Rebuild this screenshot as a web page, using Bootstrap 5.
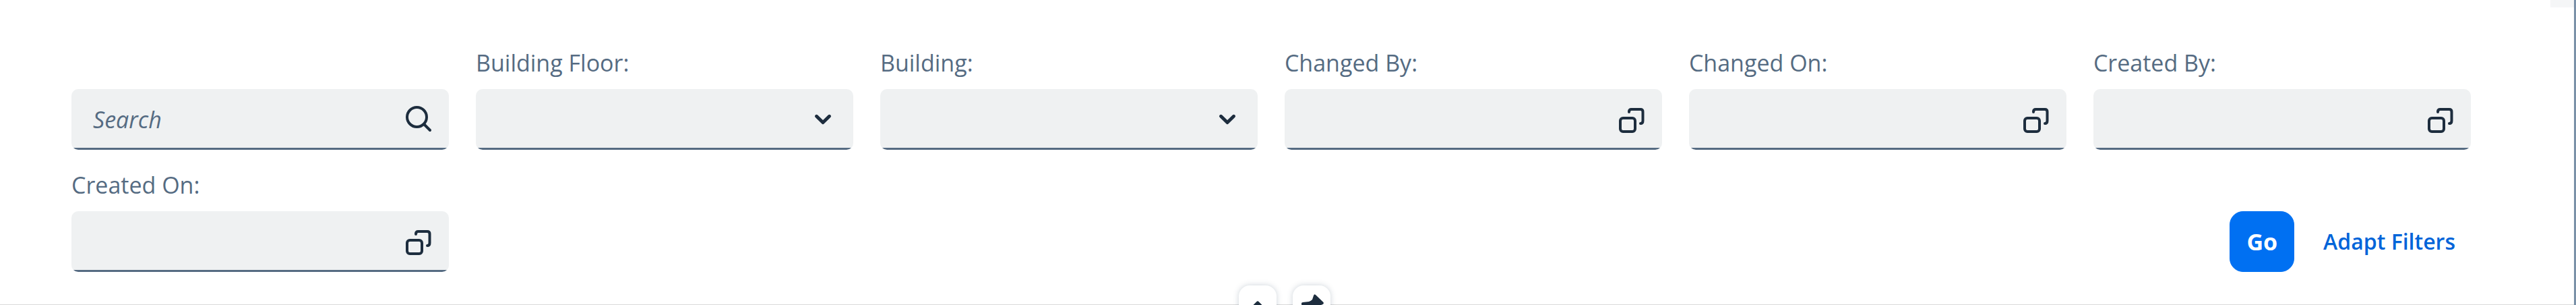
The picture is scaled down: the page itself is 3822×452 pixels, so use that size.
<!DOCTYPE html>
<html lang="en">
<head>
<meta charset="utf-8">
<meta name="viewport" content="width=device-width, initial-scale=1">
<title>Filter Bar</title>
<link href="https://cdn.jsdelivr.net/npm/bootstrap@5.3.0/dist/css/bootstrap.min.css" rel="stylesheet">
<style>
  body { font-family: "Open Sans", "Noto Sans", sans-serif; font-size: 34px; line-height: 40px; color: #556b82; background: #fff; overflow: hidden; }
  .page { border-right: 3px solid #7b91a8; min-height: 100vh; }
  .filter-bar { padding: 73px 153px 48px 106px; border-bottom: 1px solid #d9d9d9; }
  .corner { width: 35px; height: 11px; background: #f5f6f7; }
  .filter-grid { --bs-gutter-x: 40px; row-gap: 32px; }
  .filter-label { margin-bottom: 19px; }
  .field { height: 90px; border-radius: 10px; background: linear-gradient(#556b82, #556b82) bottom / 100% 3px no-repeat #eff1f2; overflow: hidden; }
  .field input, .field select { background: none; border: 0; outline: 0; padding: 0 90px 0 32px; color: #1d2d3e; appearance: none; }
  .field input::placeholder { color: #556b82; font-style: italic; opacity: 1; }
  .field-icon { right: 0; top: 0; padding: 0 23px; border: 0; background: none; pointer-events: none; }
  button.field-icon { pointer-events: auto; }
  .glyph { width: 44px; height: 44px; fill: none; stroke: #1d2d3e; stroke-width: 4; stroke-linecap: round; stroke-linejoin: round; display: block; }
  .actions { gap: 20px; }
  .btn-bar { --bs-btn-font-size: 34px; --bs-btn-line-height: 40px; --bs-btn-border-radius: 20px; --bs-btn-padding-x: 24px; height: 90px; }
  .btn-go { --bs-btn-bg: #0070f2; --bs-btn-border-color: #0070f2; --bs-btn-color: #fff; --bs-btn-hover-bg: #0064d9; --bs-btn-hover-color: #fff; font-weight: 700; }
  .btn-adapt { --bs-btn-font-size: 32px; --bs-btn-padding-x: 22px; --bs-btn-color: #0064d9; --bs-btn-hover-color: #0064d9; font-weight: 600; }
  .toggles { gap: 24px; left: 0; right: 8px; top: calc(100% - 28px); }
  .toggle { width: 56px; height: 56px; border: 0; border-radius: 16px; background: #fff; box-shadow: 0 0 8px rgba(85, 107, 130, .3); padding: 0; }
  .toggle svg { display: block; width: 56px; height: 56px; }
</style>
</head>
<body>
<svg class="d-none" aria-hidden="true">
  <symbol id="search" viewBox="0 0 44 44"><circle cx="19.5" cy="18.5" r="14.5"/><path d="M30 29l9 9"/></symbol>
  <symbol id="down" viewBox="0 0 44 44"><path stroke-width="5" d="M12.5 17.3L22 26.5l9.500-9.200"/></symbol>
  <symbol id="copy" viewBox="0 0 44 44"><rect x="5" y="20" width="22" height="20" rx="4"/><path d="M18 11v-0.500q0-3.500 3.500-3.500H35q3.500 0 3.500 3.500V24q0 4-3.500 4"/></symbol>
</svg>
<main class="page">
  <form class="filter-bar position-relative" onsubmit="return false">
    <div class="corner position-absolute top-0 end-0"></div>
    <div class="row row-cols-6 filter-grid align-items-end">
      <div class="col">
        <div class="field position-relative">
          <input class="w-100 h-100" type="search" placeholder="Search" aria-label="Search">
          <button class="field-icon position-absolute h-100" type="button" aria-label="Search"><svg class="glyph"><use href="#search"/></svg></button>
        </div>
      </div>
      <div class="col">
        <label class="filter-label d-block" for="floor">Building Floor:</label>
        <div class="field position-relative">
          <select class="w-100 h-100" id="floor"><option></option></select>
          <span class="field-icon position-absolute h-100 d-flex align-items-center"><svg class="glyph"><use href="#down"/></svg></span>
        </div>
      </div>
      <div class="col">
        <label class="filter-label d-block" for="building">Building:</label>
        <div class="field position-relative">
          <select class="w-100 h-100" id="building"><option></option></select>
          <span class="field-icon position-absolute h-100 d-flex align-items-center"><svg class="glyph"><use href="#down"/></svg></span>
        </div>
      </div>
      <div class="col">
        <label class="filter-label d-block" for="changedBy">Changed By:</label>
        <div class="field position-relative">
          <input class="w-100 h-100" type="text" id="changedBy">
          <button class="field-icon position-absolute h-100" type="button" aria-label="Choose Changed By"><svg class="glyph"><use href="#copy"/></svg></button>
        </div>
      </div>
      <div class="col">
        <label class="filter-label d-block" for="changedOn">Changed On:</label>
        <div class="field position-relative">
          <input class="w-100 h-100" type="text" id="changedOn">
          <button class="field-icon position-absolute h-100" type="button" aria-label="Choose Changed On"><svg class="glyph"><use href="#copy"/></svg></button>
        </div>
      </div>
      <div class="col">
        <label class="filter-label d-block" for="createdBy">Created By:</label>
        <div class="field position-relative">
          <input class="w-100 h-100" type="text" id="createdBy">
          <button class="field-icon position-absolute h-100" type="button" aria-label="Choose Created By"><svg class="glyph"><use href="#copy"/></svg></button>
        </div>
      </div>
      <div class="col">
        <label class="filter-label d-block" for="createdOn">Created On:</label>
        <div class="field position-relative">
          <input class="w-100 h-100" type="text" id="createdOn">
          <button class="field-icon position-absolute h-100" type="button" aria-label="Choose Created On"><svg class="glyph"><use href="#copy"/></svg></button>
        </div>
      </div>
      <div class="col-auto ms-auto actions d-flex justify-content-end">
        <button class="btn btn-bar btn-go" type="submit">Go</button>
        <button class="btn btn-bar btn-adapt" type="button">Adapt Filters</button>
      </div>
    </div>
    <div class="toggles position-absolute d-flex justify-content-center">
      <button class="toggle" type="button" aria-label="Collapse"><svg viewBox="0 0 56 56" fill="none" stroke="#1d2d3e" stroke-width="5" stroke-linecap="round" stroke-linejoin="round"><path d="M18.500 35.500L28 26l9.500 9.500"/></svg></button>
      <button class="toggle" type="button" aria-label="Pin"><svg viewBox="0 0 56 56" fill="#1d2d3e"><path d="M13 26.500q0-1.500 2-1.500l9-1q3-1 5-3l2-6q1-3 3-1l11 10.500q2 2-.5 3.500l-6 2.500q-3 2-3 5l-1.500 9q-1 2-3 .5L13 28.500z"/></svg></button>
    </div>
  </form>
</main>
<script src="https://cdn.jsdelivr.net/npm/bootstrap@5.3.0/dist/js/bootstrap.bundle.min.js"></script>
</body>
</html>
